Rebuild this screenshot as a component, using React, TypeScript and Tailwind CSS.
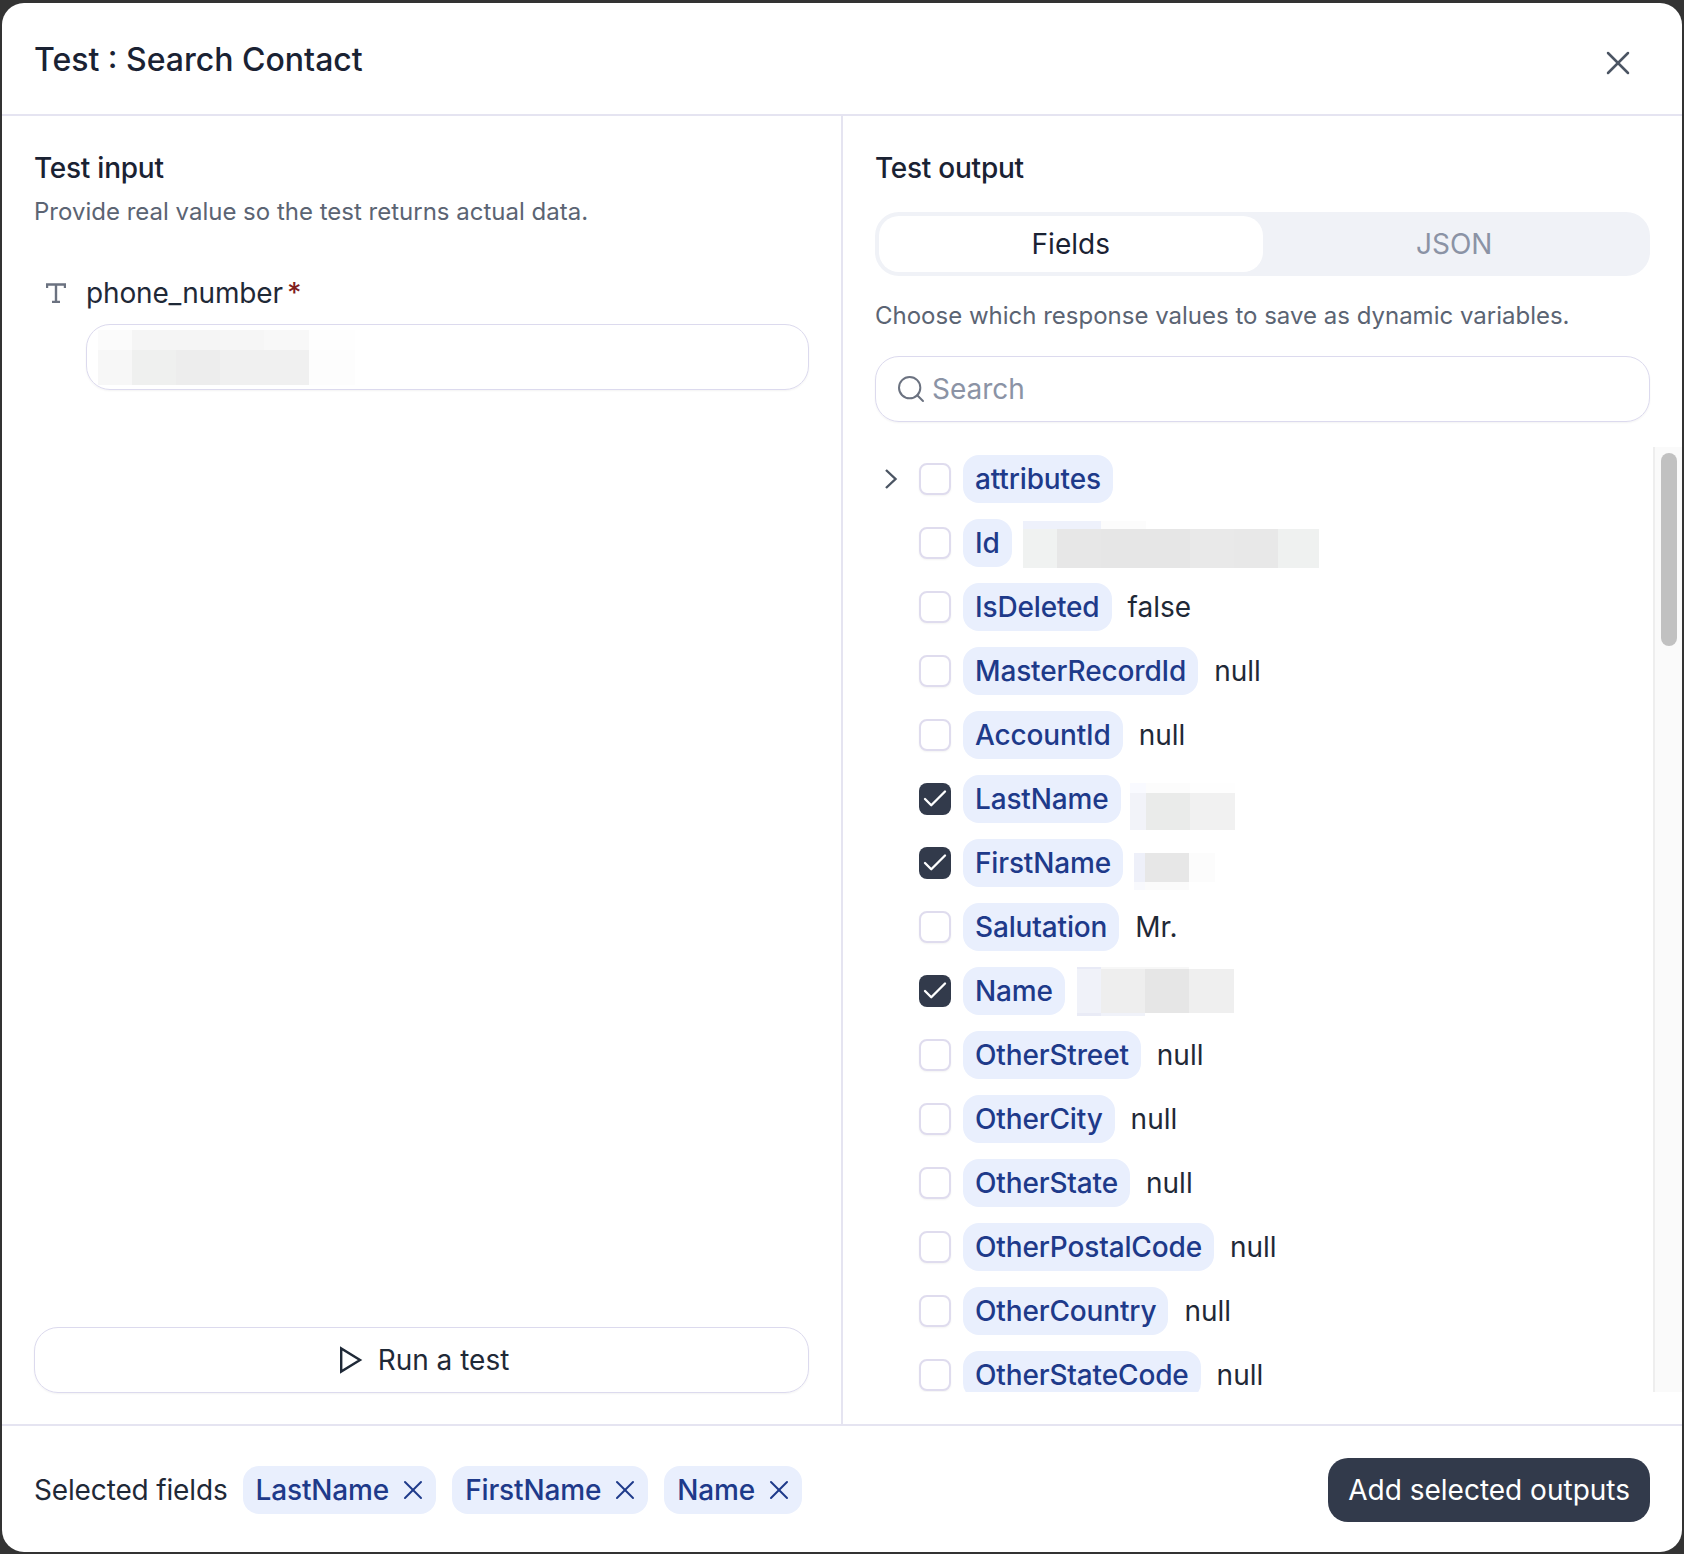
import { Check, Search, X } from 'lucide-react';

type MosaicRow = { h: number; colors: string[] };
type MosaicData = { ml: number; mt: number; widths: number[]; rows: MosaicRow[] };

// the pixelated patches over hidden values
const INPUT_BLUR: MosaicData = {
  ml: 0,
  mt: 0,
  widths: [34, 44, 44, 44, 45, 46],
  rows: [
    { h: 20, colors: ['#fbfbfb', '#f5f5f5', '#f5f5f5', '#f6f6f6', '#f8f8f8', '#fefefe'] },
    { h: 35, colors: ['#f7f7f7', '#eff0ef', '#ededed', '#f0f0f0', '#f0f0f0', '#fdfdfd'] },
  ],
};

const ID_BLUR: MosaicData = {
  ml: 11,
  mt: 3,
  widths: [34, 44, 45, 44, 44, 44, 41],
  rows: [
    { h: 8, colors: ['#eef1fb', '#eef1fb', '#fcfcfc', '#ffffff', '#ffffff', '#ffffff', '#ffffff'] },
    { h: 39, colors: ['#f0f2f1', '#e7e7e7', '#e6e6e6', '#e6e6e6', '#e9e9e9', '#e8e8e8', '#eff1f0'] },
  ],
};

const LAST_NAME_BLUR: MosaicData = {
  ml: 9,
  mt: 15,
  widths: [16, 44, 45],
  rows: [
    { h: 10, colors: ['#f9faff', '#fcfcfc', '#fefefe'] },
    { h: 37, colors: ['#f2f3f9', '#eaebea', '#f1f1f1'] },
  ],
};

const FIRST_NAME_BLUR: MosaicData = {
  ml: 11,
  mt: 17,
  widths: [11, 44, 26],
  rows: [
    { h: 29, colors: ['#eef0f9', '#e7e7e7', '#fcfcfc'] },
    { h: 8, colors: ['#f8f9fd', '#fbfbfb', '#ffffff'] },
  ],
};

const NAME_BLUR: MosaicData = {
  ml: 12,
  mt: 1,
  widths: [24, 44, 44, 45],
  rows: [
    { h: 2, colors: ['#e8eaf6', '#f7f7f7', '#f7f7f7', '#ffffff'] },
    { h: 44, colors: ['#f0f2f9', '#eeeeee', '#e6e6e6', '#efefef'] },
    { h: 3, colors: ['#e9ebf6', '#f0f2f9', '#ffffff', '#ffffff'] },
  ],
};

type Field = {
  name: string;
  value?: string;
  blur?: MosaicData;
  checked?: boolean;
  expandable?: boolean;
};

const FIELDS: Field[] = [
  { name: 'attributes', expandable: true },
  { name: 'Id', blur: ID_BLUR },
  { name: 'IsDeleted', value: 'false' },
  { name: 'MasterRecordId', value: 'null' },
  { name: 'AccountId', value: 'null' },
  { name: 'LastName', blur: LAST_NAME_BLUR, checked: true },
  { name: 'FirstName', blur: FIRST_NAME_BLUR, checked: true },
  { name: 'Salutation', value: 'Mr.' },
  { name: 'Name', blur: NAME_BLUR, checked: true },
  { name: 'OtherStreet', value: 'null' },
  { name: 'OtherCity', value: 'null' },
  { name: 'OtherState', value: 'null' },
  { name: 'OtherPostalCode', value: 'null' },
  { name: 'OtherCountry', value: 'null' },
  { name: 'OtherStateCode', value: 'null' },
];

function Mosaic({ data }: { data: MosaicData }) {
  return (
    <div className="flex shrink-0 flex-col" style={{ marginLeft: data.ml, marginTop: data.mt }}>
      {data.rows.map((row, rowIndex) => (
        <div key={rowIndex} className="flex">
          {row.colors.map((color, index) => (
            <div key={index} style={{ width: data.widths[index], height: row.h, background: color }} />
          ))}
        </div>
      ))}
    </div>
  );
}

function FieldRow({ field }: { field: Field }) {
  return (
    <div className="flex h-12 shrink-0 items-center">
      <div className="flex w-[44px] shrink-0 items-center">
        {field.expandable ? (
          <svg width="32" height="32" viewBox="0 0 32 32" fill="none">
            <path d="M11 7l9.5 9L11 25" stroke="#4b5563" strokeWidth="2.4" />
          </svg>
        ) : null}
      </div>
      {field.checked ? (
        <div className="flex size-8 shrink-0 items-center justify-center rounded-lg bg-[#323a4b]">
          <Check size={30} strokeWidth={1.9} color="#ffffff" />
        </div>
      ) : (
        <div className="size-8 shrink-0 rounded-lg border-2 border-[#dfdcee] bg-white shadow-xs" />
      )}
      <div className="ml-3 flex h-12 shrink-0 items-center rounded-2xl bg-[#e9effd] px-3 text-[28px] font-[450] tracking-[-0.15px] text-[#1e3a8a]">
        {field.name}
      </div>
      {field.value ? <span className="ml-4 text-[28px] text-[#1f2937]">{field.value}</span> : null}
      {field.blur ? <Mosaic data={field.blur} /> : null}
    </div>
  );
}

function SelectedChip({ name }: { name: string }) {
  return (
    <div className="flex h-12 items-center rounded-2xl bg-[#e9effd] pl-[13px] pr-[7px] text-[28px] font-[450] tracking-[-0.15px] text-[#1e3a8a]">
      {name}
      <X size={32} strokeWidth={1.5} className="ml-2" />
    </div>
  );
}

export default function App() {
  return (
    <div className="h-[1554px] w-[1684px] bg-[#333333] px-[2px] pb-[2px] pt-[3px] font-['Inter',sans-serif]">
      <div className="flex h-[1549px] flex-col overflow-hidden rounded-[22px] bg-white">
        <header className="flex h-[113px] shrink-0 items-center justify-between border-b-2 border-[#e5e4f1] pl-[32px] pr-[44px]">
          <h1 className="mt-[3px] text-[32px] font-medium text-[#1a2233]">Test : Search Contact</h1>
          <button type="button" className="mt-2 text-[#4b5563]">
            <X size={40} strokeWidth={1.5} />
          </button>
        </header>

        <div className="flex min-h-0 flex-1">
          <section className="flex w-[841px] shrink-0 flex-col border-r-2 border-[#e5e4f1] px-[32px] pb-[31px] pt-8">
            <h2 className="text-[28px] font-medium leading-10 tracking-[-0.25px] text-[#1a2233]">Test input</h2>
            <p className="mt-2 text-[24px] leading-8 text-[#5b6473]">
              Provide real value so the test returns actual data.
            </p>
            <div className="ml-3 mt-[45px] flex h-10 items-center">
              <svg width="20" height="20" viewBox="0 0 20 20" fill="none" className="shrink-0">
                <path d="M1 5V1.5h18V5M10 1.5V19M6 19h8" stroke="#6b7280" strokeWidth="2.4" />
              </svg>
              <span className="ml-5 text-[28px] tracking-[-0.15px] text-[#1f2937]">phone_number</span>
              <span className="ml-1 text-[28px] font-medium text-[#7f1d1d]">*</span>
            </div>
            <div className="ml-[52px] mt-[11px] flex h-[66px] items-center rounded-3xl border-[1.5px] border-[#dcdaee] pl-[11px] shadow-xs">
              <Mosaic data={INPUT_BLUR} />
            </div>
            <button
              type="button"
              className="mt-auto flex h-[66px] items-center justify-center gap-3 rounded-3xl border-[1.5px] border-[#dcdaee] text-[28px] text-[#1f2937] shadow-xs"
            >
              <svg width="32" height="32" viewBox="0 0 32 32" fill="none">
                <path d="M7.2 4.5v23L26 16z" stroke="#1f2937" strokeWidth="2.4" />
              </svg>
              Run a test
            </button>
          </section>

          <section className="flex min-w-0 flex-1 flex-col pb-[32px] pl-[32px] pt-8">
            <div className="mr-8 flex flex-col">
              <h2 className="text-[28px] font-medium leading-10 tracking-[-0.25px] text-[#1a2233]">Test output</h2>
              <div className="mt-6 grid h-16 grid-cols-2 rounded-3xl bg-[#f0f2f7] p-1 text-[28px]">
                <div className="flex items-center justify-center rounded-[20px] bg-white text-[#1a2233]">Fields</div>
                <div className="flex items-center justify-center text-[#8b93a5]">JSON</div>
              </div>
              <p className="mt-6 text-[24px] leading-8 text-[#5b6473]">
                Choose which response values to save as dynamic variables.
              </p>
              <div className="mt-6 flex h-[66px] items-center rounded-3xl border-[1.5px] border-[#dcdaee] pl-[19px] text-[28px] text-[#8b93a5] shadow-xs">
                <Search size={32} strokeWidth={1.5} color="#6b7280" />
                <span className="ml-[5px]">Search</span>
              </div>
            </div>

            <div className="mt-[25px] flex min-h-0 flex-1">
              <div className="flex min-w-0 flex-1 flex-col gap-4 overflow-hidden pt-2">
                {FIELDS.map((field) => (
                  <FieldRow key={field.name} field={field} />
                ))}
              </div>
              <div className="w-[29px] shrink-0 border-l-2 border-[#eeeeee] bg-[#fafafa] pl-[6px] pt-[6px]">
                <div className="h-[193px] w-4 rounded-full bg-[#c1c1c1]" />
              </div>
            </div>
          </section>
        </div>

        <footer className="flex h-[128px] shrink-0 items-center justify-between border-t-2 border-[#e5e4f1] pl-[32px] pr-[32px] pt-[2px]">
          <div className="flex items-center">
            <span className="mr-[15px] text-[28px] tracking-[-0.15px] text-[#1f2937]">Selected fields</span>
            <div className="flex gap-[16px]">
              <SelectedChip name="LastName" />
              <SelectedChip name="FirstName" />
              <SelectedChip name="Name" />
            </div>
          </div>
          <button type="button" className="h-16 rounded-[20px] bg-[#323a4b] px-5 text-[28px] text-white">
            Add selected outputs
          </button>
        </footer>
      </div>
    </div>
  );
}
